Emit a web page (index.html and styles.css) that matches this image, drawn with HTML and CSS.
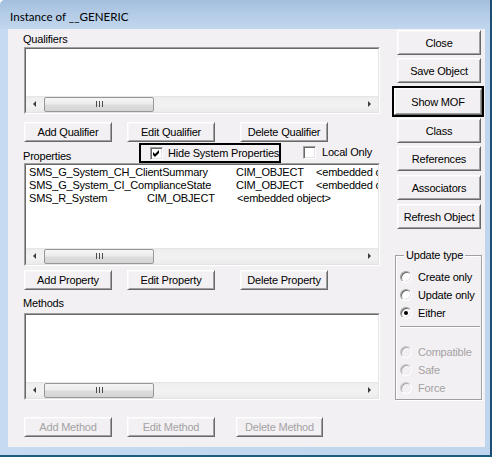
FILE: index.html
```html
<!DOCTYPE html>
<html>
<head>
<meta charset="utf-8">
<link rel="stylesheet" href="styles.css">
</head>
<body>
<div class="window">
  <div class="titlebar"><span class="title">Instance of __GENERIC</span></div>
  <div class="frame">
    <div class="client">
      <div class="main">
        <div class="label">Qualifiers</div>
        <div class="listbox lb-qual">
          <div class="lb-inner">
            <div class="lb-content"></div>
            <div class="hscroll">
              <span class="sb-btn"><span class="arr-l"></span></span>
              <span class="thumb"><span class="grip"></span></span>
              <span class="sb-btn sb-end"><span class="arr-r"></span></span>
            </div>
          </div>
        </div>
        <div class="btnrow row-qual">
          <button class="btn">Add Qualifier</button>
          <button class="btn">Edit Qualifier</button>
          <button class="btn">Delete Qualifier</button>
        </div>
        <div class="proprow">
          <span class="label plabel">Properties</span>
          <div class="focusbox">
            <span class="check"><svg width="7" height="7" viewBox="0 0 7 7"><polygon points="0,2 2,4 6,0 6,3 2,7 0,5" fill="#000"/></svg></span>
            <span class="ctext">Hide System Properties</span>
          </div>
          <div class="localonly">
            <span class="check"></span>
            <span class="ctext">Local Only</span>
          </div>
        </div>
        <div class="listbox lb-props">
          <div class="lb-inner">
            <div class="lb-content rows">
              <div class="prow long"><span class="n">SMS_G_System_CH_ClientSummary</span><span class="t">CIM_OBJECT</span><span class="v">&lt;embedded object&gt;</span></div>
              <div class="prow long"><span class="n">SMS_G_System_CI_ComplianceState</span><span class="t">CIM_OBJECT</span><span class="v">&lt;embedded object&gt;</span></div>
              <div class="prow short"><span class="n">SMS_R_System</span><span class="t">CIM_OBJECT</span><span class="v">&lt;embedded object&gt;</span></div>
            </div>
            <div class="hscroll">
              <span class="sb-btn"><span class="arr-l"></span></span>
              <span class="thumb"><span class="grip"></span></span>
              <span class="sb-btn sb-end"><span class="arr-r"></span></span>
            </div>
          </div>
        </div>
        <div class="btnrow row-prop">
          <button class="btn">Add Property</button>
          <button class="btn">Edit Property</button>
          <button class="btn">Delete Property</button>
        </div>
        <div class="label mlabel">Methods</div>
        <div class="listbox lb-meth">
          <div class="lb-inner">
            <div class="lb-content"></div>
            <div class="hscroll">
              <span class="sb-btn"><span class="arr-l"></span></span>
              <span class="thumb"><span class="grip"></span></span>
              <span class="sb-btn sb-end"><span class="arr-r"></span></span>
            </div>
          </div>
        </div>
        <div class="btnrow row-meth">
          <button class="btn disabled">Add Method</button>
          <button class="btn disabled">Edit Method</button>
          <button class="btn disabled">Delete Method</button>
        </div>
      </div>
      <div class="side">
        <button class="btn sbtn b-close">Close</button>
        <button class="btn sbtn b-save">Save Object</button>
        <div class="defbtn"><button class="btn sbtn">Show MOF</button></div>
        <button class="btn sbtn b-class">Class</button>
        <button class="btn sbtn b-refs">References</button>
        <button class="btn sbtn b-assoc">Associators</button>
        <button class="btn sbtn b-refresh">Refresh Object</button>
        <fieldset class="group">
          <legend>Update type</legend>
          <div class="radio-row"><span class="radio"></span><span>Create only</span></div>
          <div class="radio-row"><span class="radio"></span><span>Update only</span></div>
          <div class="radio-row"><span class="radio on"></span><span>Either</span></div>
          <div class="sep"></div>
          <div class="radio-row dis"><span class="radio"></span><span>Compatible</span></div>
          <div class="radio-row dis"><span class="radio"></span><span>Safe</span></div>
          <div class="radio-row dis"><span class="radio"></span><span>Force</span></div>
        </fieldset>
      </div>
    </div>
  </div>
</div>
</body>
</html>
```

FILE: styles.css
```css
* { box-sizing: border-box; }
html, body { margin: 0; padding: 0; background: #ffffff; }
body {
  width: 492px;
  height: 457px;
  overflow: hidden;
  font-family: "Liberation Sans", Arial, sans-serif;
  font-size: 11px;
  letter-spacing: -0.2px;
  color: #000;
}
.window {
  width: 492px;
  height: 457px;
  display: flex;
  flex-direction: column;
  border-right: 2px solid #1f4d72;
  border-bottom: 2px solid #1d5c7e;
  border-top-left-radius: 5px;
  background: #c3d8ef;
  overflow: hidden;
}
.titlebar {
  height: 29px;
  flex: none;
  padding: 10px 0 0 10px;
  background: linear-gradient(to bottom, #a3bedc 0%, #b3cbe6 45%, #c1d7ee 100%);
}
.title {
  font-family: Lato, "Liberation Sans", sans-serif;
  font-size: 11.6px;
  line-height: 14px;
  letter-spacing: 0;
  color: #000;
}
.frame {
  flex: 1;
  padding: 0 5px 8px 8px;
  background: linear-gradient(to right, #c6dbf1, #bed5ed);
}
.client {
  width: 477px;
  height: 418px;
  background: #f3f0f3;
  display: grid;
  grid-template-columns: 378px 99px;
}
.main {
  padding: 4px 0 0 16px;
  display: flex;
  flex-direction: column;
}
.label {
  height: 13px;
  line-height: 13px;
  margin-left: -1px;
  white-space: nowrap;
  flex: none;
}
.mlabel { margin-top: 7px; }
.listbox {
  width: 356px;
  border: 1px solid;
  border-color: #a0a0a0 #ffffff #ffffff #a0a0a0;
  flex: none;
}
.lb-inner {
  height: 100%;
  border: 1px solid;
  border-color: #696969 #e3e3e3 #e3e3e3 #696969;
  background: #fff;
  display: flex;
  flex-direction: column;
}
.lb-content { flex: 1; overflow: hidden; }
.lb-qual { margin-top: 1px; height: 67px; }
.lb-props { height: 103px; }
.lb-meth { margin-top: 3px; height: 87px; }
.hscroll {
  height: 16px;
  flex: none;
  display: flex;
  align-items: center;
  background: linear-gradient(to bottom, #e3e3e3 0, #efefef 2px, #f2f2f2 60%, #ebebeb 100%);
}
.sb-btn {
  width: 17px;
  height: 16px;
  display: flex;
  align-items: center;
  justify-content: center;
  flex: none;
}
.sb-end { margin-left: auto; }
.arr-l {
  width: 0; height: 0;
  border-top: 3px solid transparent;
  border-bottom: 3px solid transparent;
  border-right: 3px solid #3c3c3c;
}
.arr-r {
  width: 0; height: 0;
  border-top: 3px solid transparent;
  border-bottom: 3px solid transparent;
  border-left: 3px solid #3c3c3c;
}
.thumb {
  width: 110px;
  height: 15px;
  margin-left: 1px;
  border: 1px solid #979797;
  border-radius: 2px;
  background: linear-gradient(to bottom, #f5f5f5 0%, #ececec 45%, #dcdcdc 55%, #d4d4d4 100%);
  display: flex;
  align-items: center;
  justify-content: center;
}
.grip {
  width: 7px;
  height: 6px;
  background: linear-gradient(to right, #4a4a4a 1px, transparent 1px) repeat-x;
  background-size: 3px 6px;
}
.btnrow { display: flex; flex: none; }
.row-qual { margin-top: 8px; }
.row-prop { margin-top: 4px; }
.row-meth { margin-top: 17px; }
.btn {
  width: 88px;
  height: 20px;
  padding: 0;
  margin: 0;
  border: 1px solid;
  border-color: #ffffff #696969 #696969 #ffffff;
  box-shadow: inset 1px 1px 0 #f7f7f7, inset -1px -1px 0 #a0a0a0;
  background: #f3f0f3;
  font-family: inherit;
  font-size: 11px;
  letter-spacing: -0.2px;
  color: #000;
  display: flex;
  align-items: center;
  justify-content: center;
  white-space: nowrap;
}
.btnrow .btn + .btn { margin-left: 15px; }
.btnrow .btn + .btn + .btn { margin-left: 25px; }
.row-meth .btn + .btn + .btn { margin-left: 21px; width: 87px; }
.btn.disabled { color: #a3a3a3; }
.proprow {
  height: 21px;
  display: flex;
  align-items: flex-start;
  flex: none;
}
.plabel { width: 116px; margin-top: 8px; }
.focusbox {
  margin-top: 1px;
  width: 142px;
  height: 20px;
  border: 2px solid #000;
  padding: 1px 0 0 9px;
  display: flex;
  align-items: center;
}
.focusbox .check { margin-top: -1px; }
.ctext { line-height: 13px; white-space: nowrap; }
.check {
  width: 13px;
  height: 13px;
  flex: none;
  border: 1px solid;
  border-color: #a0a0a0 #ffffff #ffffff #a0a0a0;
  box-shadow: inset 1px 1px 0 #696969, inset -1px -1px 0 #e3e3e3;
  background: #fff;
  display: flex;
  align-items: center;
  justify-content: center;
  margin-right: 5px;
}
.check svg { display: block; }
.localonly {
  margin-left: 22px;
  margin-top: 4px;
  display: flex;
  align-items: center;
}
.localonly .check { margin-right: 6px; }
.rows { padding: 1px 0 0 3px; }
.prow { height: 13px; line-height: 13px; white-space: nowrap; display: flex; }
.prow span { flex: none; }
.long .n { width: 207px; }
.long .t { width: 80px; }
.short .n { width: 118px; }
.short .t { width: 90px; }
.side {
  padding: 1px 0 0 11px;
  display: flex;
  flex-direction: column;
}
.sbtn { width: 84px; height: 25px; flex: none; }
.b-save { margin-top: 3px; }
.defbtn {
  margin-top: 3px;
  margin-left: -5px;
  width: 92px;
  height: 31px;
  border: 2px solid #000;
  flex: none;
}
.defbtn .sbtn { width: 100%; height: 100%; }
.b-class { margin-top: 1px; }
.b-refs { margin-top: 3px; }
.b-assoc { margin-top: 4px; }
.b-refresh { margin-top: 4px; }
.group {
  margin: 20px 0 0 -2px;
  width: 87px;
  height: 151px;
  padding: 6px 0 0 4px;
  border: 1px solid #a0a0a0;
  box-shadow: inset 1px 1px 0 #ffffff, 1px 1px 0 #ffffff;
  min-width: 0;
}
.group legend {
  padding: 0 2px;
  margin-left: 4px;
  line-height: 13px;
  background: #f3f0f3;
}
.radio-row {
  height: 18px;
  display: flex;
  align-items: center;
  white-space: nowrap;
}
.radio {
  width: 12px;
  height: 12px;
  border-radius: 50%;
  border: 1px solid;
  border-color: #a0a0a0 #ffffff #ffffff #a0a0a0;
  box-shadow: inset 1px 1px 0 #696969, inset -1px -1px 0 #e3e3e3;
  background: #fff;
  margin-right: 6px;
  flex: none;
  display: flex;
  align-items: center;
  justify-content: center;
}
.radio.on::after {
  content: "";
  width: 4px;
  height: 4px;
  border-radius: 50%;
  background: #000;
}
.sep {
  margin: 4px 0 15px 0;
  width: 80px;
  height: 2px;
  border-top: 1px solid #a0a0a0;
  border-bottom: 1px solid #ffffff;
}
.dis { color: #a3a3a3; }
.dis .radio {
  border-color: #c8c8c8 #ffffff #ffffff #c8c8c8;
  box-shadow: inset 1px 1px 0 #a8a8a8, inset -1px -1px 0 #ececec;
  background: #f3f0f3;
}
```
